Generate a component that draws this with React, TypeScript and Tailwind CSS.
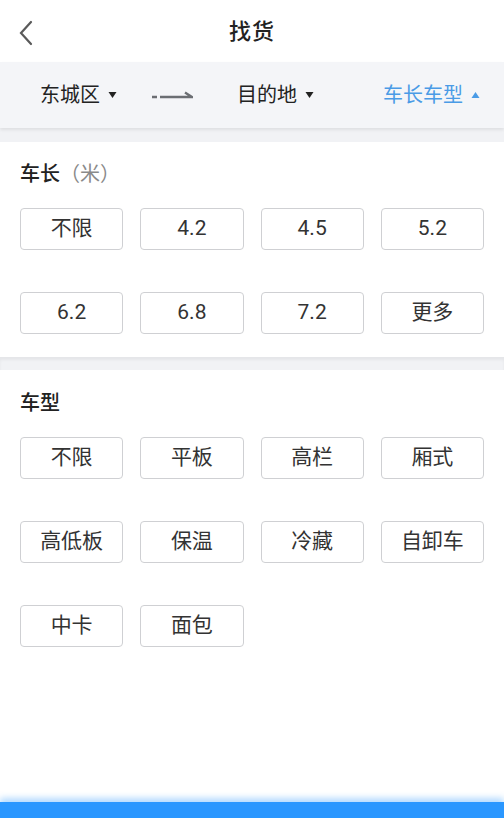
const lengths = ['不限', '4.2', '4.5', '5.2', '6.2', '6.8', '7.2', '更多'];
const types = ['不限', '平板', '高栏', '厢式', '高低板', '保温', '冷藏', '自卸车', '中卡', '面包'];

function Option({ label }: { label: string }) {
  return (
    <button className="h-[42px] rounded-[4px] border border-[#cfd0d3] bg-white text-[21px] text-[#333] flex items-center justify-center">
      {label}
    </button>
  );
}

function Caret({ up, color }: { up?: boolean; color: string }) {
  return (
    <svg width="9" height="8" viewBox="0 0 9 8" className="ml-[8px]">
      <path d={up ? 'M4.5 1 L8.5 7 L0.5 7 Z' : 'M0.5 1 L8.5 1 L4.5 7 Z'} fill={color} />
    </svg>
  );
}

export default function App() {
  return (
    <div
      className="w-[504px] h-[818px] flex flex-col bg-white overflow-hidden"
      style={{ fontFamily: 'Roboto, "Noto Sans CJK SC", sans-serif' }}
    >
      <header className="relative h-[62px] bg-white flex items-center justify-center">
        <svg width="16" height="26" viewBox="0 0 16 26" className="absolute left-[18px] top-[20px]">
          <path d="M13 2 L3 13 L13 24" fill="none" stroke="#5a5a5a" strokeWidth="2.2" strokeLinecap="round" />
        </svg>
        <h1 className="text-[22px] font-medium text-[#222] tracking-[1px]">找货</h1>
      </header>

      <div className="h-[66px] bg-[#f4f5f8] flex items-center px-[40px] text-[20px] text-[#222] shadow-[0_2px_3px_rgba(0,0,0,0.08)] relative z-10">
        <div className="flex items-center">
          东城区
          <Caret color="#222" />
        </div>
        <svg width="41" height="10" viewBox="0 0 41 10" className="ml-[35px]">
          <path d="M0 7 H5 M8 7 H40 L33 2.5" fill="none" stroke="#6b6e73" strokeWidth="2.4" />
        </svg>
        <div className="flex items-center ml-[44px]">
          目的地
          <Caret color="#222" />
        </div>
        <div className="flex items-center ml-auto -mr-[16px] text-[#4a9be6]">
          车长车型
          <Caret up color="#4a9be6" />
        </div>
      </div>

      <div className="h-[14px] bg-[#f1f2f5]" />

      <section className="bg-white px-[20px] pt-[19px] pb-[23px]">
        <h2 className="text-[20px] leading-[26px] text-[#222] font-medium">
          车长<span className="font-normal text-[#8a8a8a]">（米）</span>
        </h2>
        <div className="grid grid-cols-4 gap-x-[17px] gap-y-[42px] mt-[21px]">
          {lengths.map((l) => (
            <Option key={l} label={l} />
          ))}
        </div>
      </section>

      <div className="h-[13px] bg-[#f1f2f5] shadow-[inset_0_3px_3px_rgba(0,0,0,0.05)]" />

      <section className="flex-1 bg-white px-[20px] pt-[20px]">
        <h2 className="text-[20px] leading-[26px] text-[#222] font-medium">车型</h2>
        <div className="grid grid-cols-4 gap-x-[17px] gap-y-[42px] mt-[21px]">
          {types.map((t) => (
            <Option key={t} label={t} />
          ))}
        </div>
      </section>

      <div className="h-[16px] bg-[#2a97ff] shadow-[0_-4px_6px_rgba(42,151,255,0.35)]" />
    </div>
  );
}
